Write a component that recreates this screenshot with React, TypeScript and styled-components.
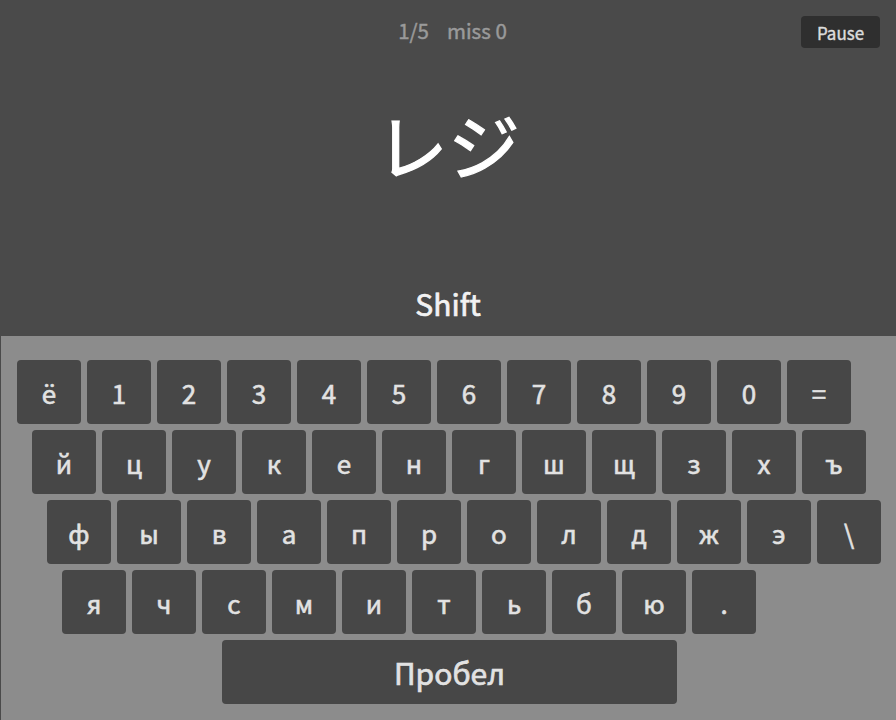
import React from "react";
import styled, { createGlobalStyle } from "styled-components";

const rows: string[][] = [
  ["ё", "1", "2", "3", "4", "5", "6", "7", "8", "9", "0", "="],
  ["й", "ц", "у", "к", "е", "н", "г", "ш", "щ", "з", "х", "ъ"],
  ["ф", "ы", "в", "а", "п", "р", "о", "л", "д", "ж", "э", "\\"],
  ["я", "ч", "с", "м", "и", "т", "ь", "б", "ю", "."],
];

export default function App() {
  return (
    <>
      <GlobalStyle />
      <Screen>
        <Stage>
          <Status>
            <span>1/5</span>
            <span>miss 0</span>
          </Status>
          <PauseButton>Pause</PauseButton>
          <Word>レジ</Word>
          <Hint>Shift</Hint>
        </Stage>
        <Keyboard>
          {rows.map((row, i) => (
            <KeyRow key={i} $indent={i * 15}>
              {row.map((k) => (
                <Key key={k}>{k}</Key>
              ))}
            </KeyRow>
          ))}
          <KeyRow $indent={205}>
            <SpaceKey>Пробел</SpaceKey>
          </KeyRow>
        </Keyboard>
      </Screen>
    </>
  );
}

// no medium cut installed, so thicken the regular face a little
const GlobalStyle = createGlobalStyle`
  html, body {
    margin: 0;
    padding: 0;
    background: #4a4a4a;
  }
  body {
    font-family: "Noto Sans CJK JP", "Noto Sans", sans-serif;
  }
`;

const Screen = styled.div`
  display: flex;
  flex-direction: column;
  width: 896px;
  height: 720px;
  overflow: hidden;
`;

const Stage = styled.div`
  position: relative;
  height: 336px;
  background: #4a4a4a;
  display: flex;
  flex-direction: column;
  align-items: center;
`;

const Status = styled.div`
  margin-top: 17px;
  margin-left: 9px;
  display: flex;
  gap: 18px;
  font-size: 20.5px;
  line-height: 26px;
  color: #9a9a9a;
  -webkit-text-stroke: 0.45px #9a9a9a;
`;

const PauseButton = styled.button`
  position: absolute;
  top: 16px;
  right: 16px;
  width: 79px;
  height: 32px;
  border: none;
  border-radius: 4px;
  background: #2f2f2f;
  color: #dcdcdc;
  font-family: inherit;
  font-size: 17px;
  padding: 1px 0 0;
  -webkit-text-stroke: 0.4px #dcdcdc;
`;

const Word = styled.div`
  margin-top: 48px;
  font-size: 72px;
  line-height: 104px;
  color: #ffffff;
  -webkit-text-stroke: 1.2px #ffffff;
`;

const Hint = styled.div`
  margin-top: auto;
  margin-bottom: 13px;
  font-size: 30px;
  line-height: 40px;
  color: #f2f2f2;
  -webkit-text-stroke: 0.7px #f2f2f2;
`;

const Keyboard = styled.div`
  flex: 1;
  background: #8c8c8c;
  border-left: 1px solid #4a4a4a;
  padding: 24px 0 0 16px;
  display: flex;
  flex-direction: column;
  gap: 6px;
`;

const KeyRow = styled.div<{ $indent: number }>`
  display: flex;
  gap: 6px;
  padding-left: ${(p) => p.$indent}px;
`;

const Key = styled.div`
  width: 64px;
  height: 64px;
  border-radius: 4px;
  background: #474747;
  color: #e2e2e2;
  display: flex;
  align-items: center;
  justify-content: center;
  font-size: 26px;
  -webkit-text-stroke: 0.6px #e2e2e2;
`;

const SpaceKey = styled(Key)`
  width: 455px;
  font-size: 30px;
  -webkit-text-stroke: 0.7px #e2e2e2;
`;
